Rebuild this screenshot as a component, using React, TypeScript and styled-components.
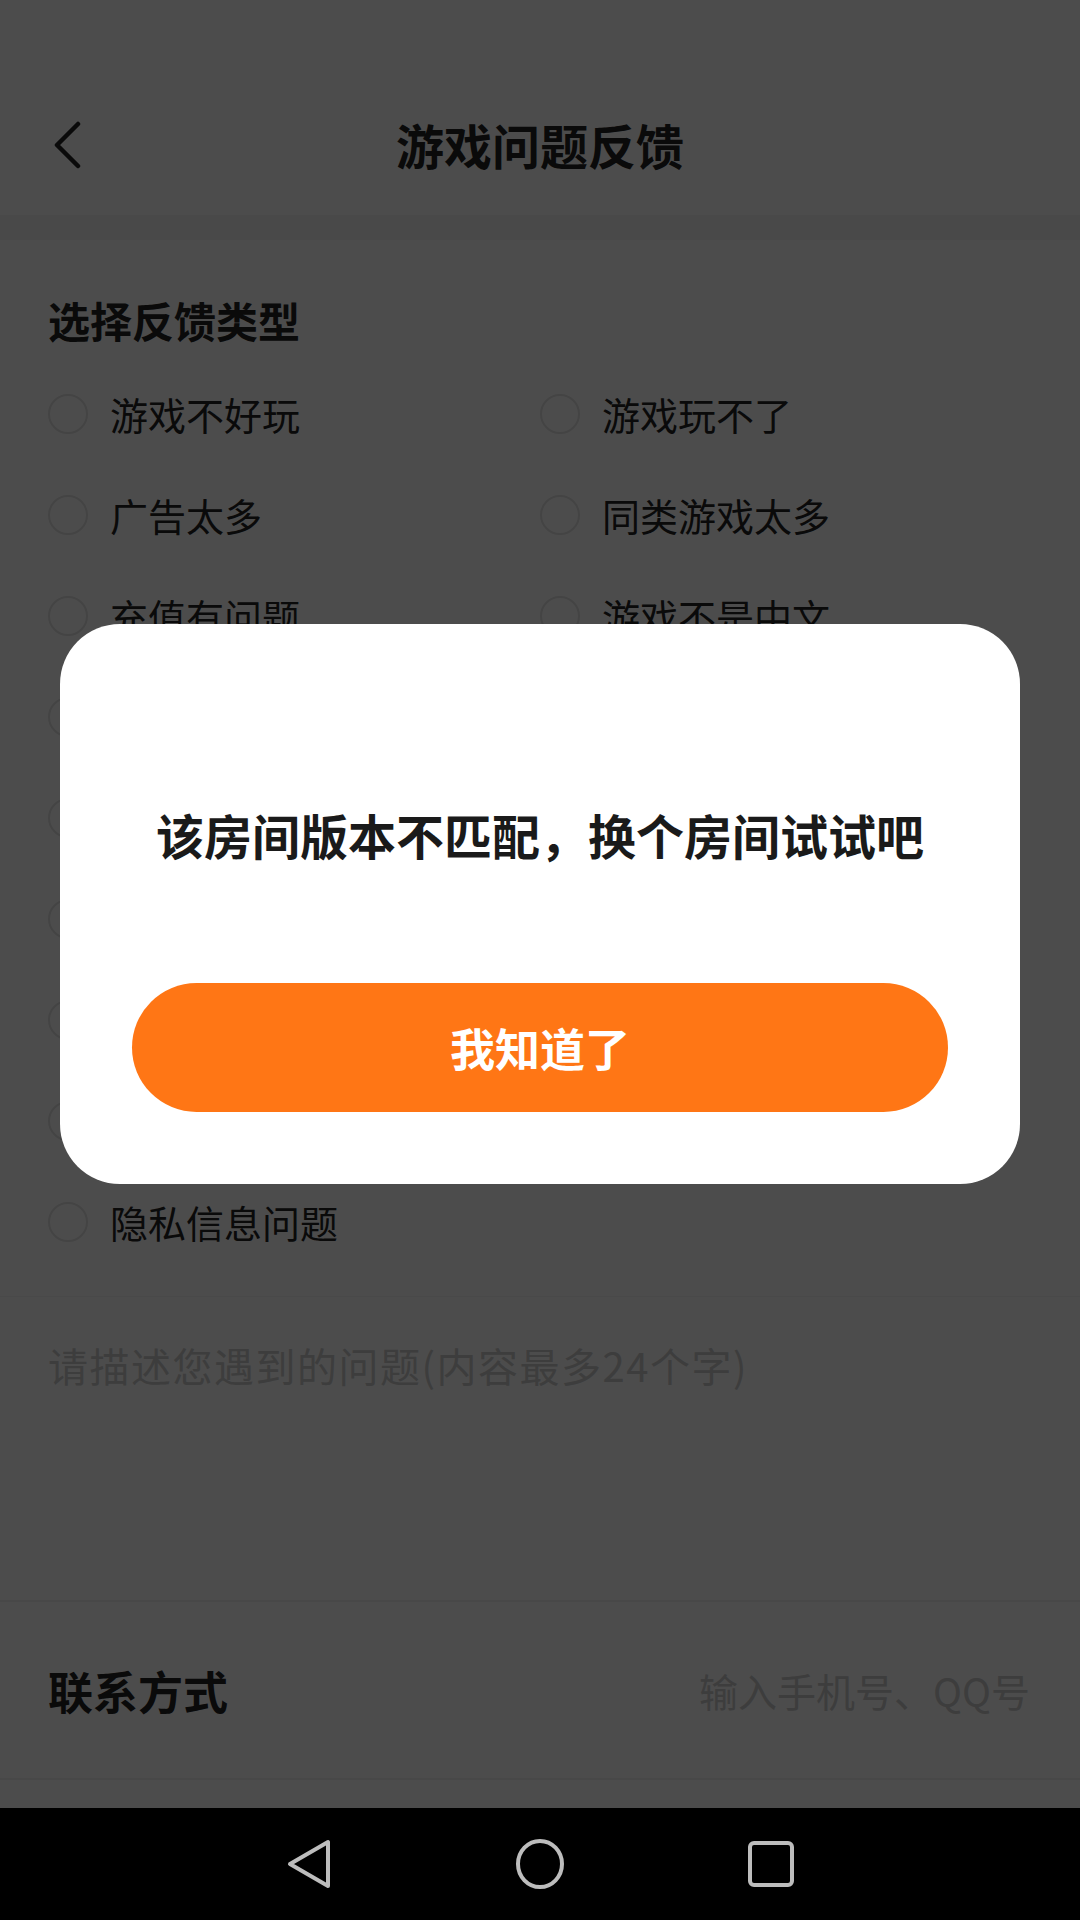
import styled, { createGlobalStyle } from 'styled-components';

const GlobalStyle = createGlobalStyle`
  html, body {
    margin: 0;
    padding: 0;
    background: #000;
  }
  body {
    font-family: 'Noto Sans CJK SC', 'Noto Sans', sans-serif;
    color: #222;
  }
  * {
    box-sizing: border-box;
  }
`;

const Screen = styled.div`
  width: 1080px;
  height: 1920px;
  display: flex;
  flex-direction: column;
`;

const Page = styled.div`
  position: relative;
  flex: 1;
  background: #fff;
  overflow: hidden;
  display: flex;
  flex-direction: column;
`;

const Header = styled.header`
  height: 215px;
  padding-top: 75px;
  display: grid;
  grid-template-columns: 1fr auto 1fr;
  align-items: center;
`;

const BackButton = styled.div`
  justify-self: start;
  padding-left: 52px;
  display: flex;
  align-items: center;
`;

const Title = styled.h1`
  margin: 0;
  font-size: 48px;
  font-weight: 700;
  color: #222;
  line-height: 1.2;
`;

const Gap = styled.div`
  height: 25px;
  background: #f5f5f5;
`;

const Section = styled.section`
  padding: 0 48px;
`;

const SectionTitle = styled.h2`
  margin: 50px 0 0;
  font-size: 42px;
  line-height: 59px;
  font-weight: 700;
  color: #222;
`;

const Options = styled.div`
  margin-top: 14px;
  display: grid;
  grid-template-columns: 1fr 1fr;
  grid-auto-rows: 101px;
`;

const Option = styled.label`
  display: flex;
  align-items: center;
  gap: 22px;
  font-size: 38px;
  color: #222;
`;

const Radio = styled.span`
  width: 40px;
  height: 40px;
  border-radius: 50%;
  border: 2px solid #e3e3e3;
  flex-shrink: 0;
`;

const Describe = styled.div`
  margin-top: 24px;
  height: 304px;
  border-top: 1px solid #f5f5f5;
  padding: 44px 48px 0;
  font-size: 40px;
  letter-spacing: 1.5px;
  line-height: 1.2;
  color: #cccccc;
`;

const Divider = styled.div`
  height: 2px;
  background: #f0f0f0;
`;

const ContactRow = styled.div`
  height: 176px;
  padding: 0 50px 0 48px;
  display: flex;
  align-items: center;
  justify-content: space-between;
`;

const ContactLabel = styled.span`
  font-size: 45px;
  font-weight: 700;
  color: #222;
`;

const ContactHint = styled.span`
  font-size: 39px;
  color: #cccccc;
`;

const Overlay = styled.div`
  position: absolute;
  inset: 0;
  background: rgba(0, 0, 0, 0.7);
  display: flex;
  align-items: center;
  justify-content: center;
`;

const Dialog = styled.div`
  width: 960px;
  background: #fff;
  border-radius: 60px;
  padding: 178px 72px 72px;
  display: flex;
  flex-direction: column;
  align-items: stretch;
`;

const DialogText = styled.p`
  margin: 0;
  text-align: center;
  font-size: 48px;
  line-height: 64px;
  font-weight: 700;
  color: #1a1a1a;
`;

const ConfirmButton = styled.button`
  margin-top: 117px;
  height: 129px;
  border: none;
  border-radius: 65px;
  background: #ff7615;
  color: #fff;
  font-family: inherit;
  font-size: 45px;
  font-weight: 700;
`;

const NavBar = styled.nav`
  height: 112px;
  background: #000;
  display: flex;
  align-items: center;
  justify-content: center;
  gap: 181px;
`;

const NavIcon = styled.svg`
  width: 50px;
  height: 50px;
  fill: none;
  stroke: #bdbdbd;
  stroke-width: 4;
  stroke-linejoin: round;
`;

const leftOptions = [
  '游戏不好玩',
  '广告太多',
  '充值有问题',
  '游戏太卡',
  '闪退黑屏',
  '无法登录',
  '网络连接差',
  '内容违规',
  '隐私信息问题',
];

const rightOptions = [
  '游戏玩不了',
  '同类游戏太多',
  '游戏不是中文',
  '加载太慢',
  '操作不流畅',
  '画面有问题',
  '声音有问题',
  '其他问题',
];

export default function App() {
  return (
    <>
      <GlobalStyle />
      <Screen>
        <Page>
          <Header>
            <BackButton>
              <svg width="32" height="48" viewBox="0 0 32 48">
                <path
                  d="M26 3 L5 24 L26 45"
                  fill="none"
                  stroke="#222"
                  strokeWidth="4.5"
                  strokeLinecap="round"
                  strokeLinejoin="round"
                />
              </svg>
            </BackButton>
            <Title>游戏问题反馈</Title>
            <span />
          </Header>
          <Gap />

          <Section>
            <SectionTitle>选择反馈类型</SectionTitle>
            <Options>
              {leftOptions.map((left, i) => (
                <>
                  <Option key={`l${i}`}>
                    <Radio />
                    {left}
                  </Option>
                  {rightOptions[i] ? (
                    <Option key={`r${i}`}>
                      <Radio />
                      {rightOptions[i]}
                    </Option>
                  ) : (
                    <span key={`r${i}`} />
                  )}
                </>
              ))}
            </Options>
          </Section>

          <Describe>请描述您遇到的问题(内容最多24个字)</Describe>
          <Divider />
          <ContactRow>
            <ContactLabel>联系方式</ContactLabel>
            <ContactHint>输入手机号、QQ号</ContactHint>
          </ContactRow>
          <Divider />

          <Overlay>
            <Dialog>
              <DialogText>该房间版本不匹配，换个房间试试吧</DialogText>
              <ConfirmButton>我知道了</ConfirmButton>
            </Dialog>
          </Overlay>
        </Page>

        <NavBar>
          <NavIcon viewBox="0 0 50 50">
            <path d="M44 3 L44 47 L6 25 Z" />
          </NavIcon>
          <NavIcon viewBox="0 0 50 50">
            <ellipse cx="25" cy="25" rx="22" ry="23" />
          </NavIcon>
          <NavIcon viewBox="0 0 50 50">
            <rect x="4" y="4" width="42" height="42" rx="4" />
          </NavIcon>
        </NavBar>
      </Screen>
    </>
  );
}
